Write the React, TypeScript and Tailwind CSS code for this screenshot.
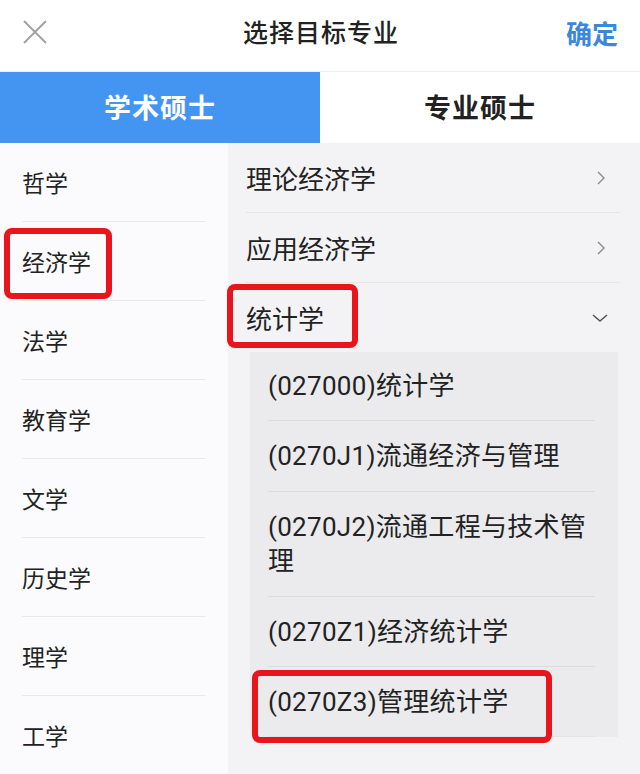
import React from "react";

const font = { fontFamily: '"Noto Sans CJK SC", "Noto Sans", sans-serif' };
const latin = { fontFamily: 'Roboto, "Noto Sans CJK SC", sans-serif' };

const leftItems = ["哲学", "经济学", "法学", "教育学", "文学", "历史学", "理学", "工学"];

const subItems = [
  { text: "(027000)统计学", h: "h-[69px]" },
  { text: "(0270J1)流通经济与管理", h: "h-[71px]" },
  { text: "(0270J2)流通工程与技术管理", h: "h-[105px]" },
  { text: "(0270Z1)经济统计学", h: "h-[70px]" },
  { text: "(0270Z3)管理统计学", h: "h-[70px]" },
];

function ChevronRight() {
  return (
    <svg width="10" height="16" viewBox="0 0 10 16" fill="none">
      <path d="M2 2l6 6-6 6" stroke="#8a8a8e" strokeWidth="1.4" />
    </svg>
  );
}

function ChevronDown() {
  return (
    <svg width="18" height="10" viewBox="0 0 18 10" fill="none">
      <path d="M2 2l7 6 7-6" stroke="#555" strokeWidth="1.6" />
    </svg>
  );
}

export default function App() {
  return (
    <div className="w-[640px] h-[774px] overflow-hidden bg-white text-[#222]" style={font}>
      {/* header */}
      <div className="h-[72px] flex items-center justify-between px-[22px] pb-[7px] border-b border-[#efeff1]">
        <svg width="26" height="26" viewBox="0 0 26 26" fill="none">
          <path d="M2 2l22 22M24 2L2 24" stroke="#a2a2a4" strokeWidth="2" />
        </svg>
        <div className="text-[25px] font-medium tracking-[1px] ml-[28px]">选择目标专业</div>
        <div className="text-[26px] font-bold text-[#3a88dd]">确定</div>
      </div>

      {/* tabs */}
      <div className="flex h-[71px]">
        <div className="w-[320px] bg-[#4494f2] text-white text-[27px] font-bold flex items-center justify-center tracking-[1px]">
          学术硕士
        </div>
        <div className="flex-1 bg-white text-[27px] font-bold flex items-center justify-center tracking-[1px]">
          专业硕士
        </div>
      </div>

      <div className="flex h-[631px]">
        {/* left categories */}
        <div className="w-[228px] bg-[#fbfbfd] pl-[22px] pr-[23px]">
          {leftItems.map((item, i) => (
            <div
              key={item}
              className="relative h-[79px] flex items-center border-b border-[#e9e9eb] text-[23px]"
            >
              {item}
              {i === 1 && (
                <div className="absolute left-[-18px] top-[6px] w-[108px] h-[71px] border-[6px] border-[#e8161c] rounded-[8px]" />
              )}
            </div>
          ))}
        </div>

        {/* right list */}
        <div className="flex-1 bg-[#f3f3f5] text-[26px]">
          <div className="pl-[18px] pr-[20px]">
            <div className="h-[70px] flex items-center justify-between border-b border-[#e6e6e8]">
              <span>理论经济学</span>
              <span className="mr-[14px]"><ChevronRight /></span>
            </div>
            <div className="h-[70px] flex items-center justify-between border-b border-[#e6e6e8]">
              <span>应用经济学</span>
              <span className="mr-[14px]"><ChevronRight /></span>
            </div>
            <div className="relative h-[69px] flex items-center justify-between">
              <span>统计学</span>
              <span className="mr-[11px]"><ChevronDown /></span>
              <div className="absolute left-[-19px] top-[1px] w-[131px] h-[64px] border-[6px] border-[#e8161c] rounded-[8px]" />
            </div>
          </div>

          <div className="mx-[22px] bg-[#ebebed]" style={latin}>
            {subItems.map((item, i) => (
              <div key={item.text} className="relative pl-[18px] pr-[23px]">
                <div
                  className={
                    item.h +
                    " flex items-center leading-[34px] border-b " +
                    (i < subItems.length - 1 ? "border-[#dcdcde]" : "border-[#e2e2e4]")
                  }
                >
                  <span className="tracking-[0.3px]">{item.text}</span>
                </div>
                {i === subItems.length - 1 && (
                  <div className="absolute left-[2px] top-[3px] w-[300px] h-[73px] border-[6px] border-[#e8161c] rounded-[8px]" />
                )}
              </div>
            ))}
          </div>
        </div>
      </div>
    </div>
  );
}
